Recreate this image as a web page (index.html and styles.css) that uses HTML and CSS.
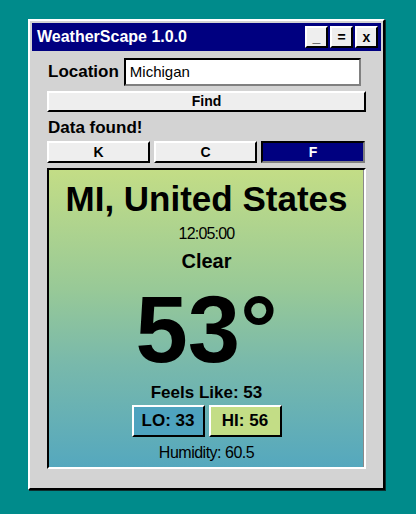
FILE: index.html
```html
<!DOCTYPE html>
<html>
<head>
<meta charset="utf-8">
<link rel="stylesheet" href="styles.css">
</head>
<body>
<div class="window">
  <div class="titlebar">
    <span class="title">WeatherScape 1.0.0</span>
    <div class="controls">
      <button class="ctl">_</button>
      <button class="ctl">=</button>
      <button class="ctl">x</button>
    </div>
  </div>
  <div class="content">
    <div class="loc-row">
      <label class="loc-label">Location</label>
      <div class="input">Michigan</div>
    </div>
    <button class="btn find">Find</button>
    <div class="status">Data found!</div>
    <div class="units">
      <button class="btn unit">K</button>
      <button class="btn unit">C</button>
      <button class="btn unit active">F</button>
    </div>
    <div class="panel">
      <div class="place">MI, United States</div>
      <div class="time">12:05:00</div>
      <div class="cond">Clear</div>
      <div class="temp">53°</div>
      <div class="feels">Feels Like: 53</div>
      <div class="range">
        <div class="box lo">LO: 33</div>
        <div class="box hi">HI: 56</div>
      </div>
      <div class="humid">Humidity: 60.5</div>
    </div>
  </div>
</div>
</body>
</html>
```
FILE: styles.css
```css
* { box-sizing: border-box; }
html, body { margin: 0; padding: 0; }
body {
  background: #008b8b;
  width: 416px;
  height: 514px;
  overflow: hidden;
  font-family: "Liberation Sans", Arial, sans-serif;
  color: #000;
  padding-top: 19px;
  padding-left: 28px;
}
.window {
  width: 357px;
  height: 471px;
  background: #d3d3d3;
  border-style: solid;
  border-width: 2px;
  border-color: #fff #000 #000 #fff;
  box-shadow: 1px 1px 0 #0b2e2e;
  padding: 2px;
  display: flex;
  flex-direction: column;
}
.titlebar {
  height: 28px;
  flex: none;
  background: #000080;
  display: flex;
  align-items: center;
  justify-content: space-between;
  padding: 0 3px 0 5px;
}
.title {
  color: #fff;
  font-weight: bold;
  font-size: 16px;
}
.controls { display: flex; gap: 2px; }
.ctl {
  width: 23px;
  height: 22px;
  padding: 0;
  background: #eeeeee;
  border-style: solid;
  border-width: 2px;
  border-color: #fff #000 #000 #fff;
  font-family: "Liberation Sans", Arial, sans-serif;
  font-weight: bold;
  font-size: 14px;
  color: #000;
  line-height: 16px;
}
.content {
  padding: 7px 14px 0 15px;
  display: flex;
  flex-direction: column;
}
.loc-row {
  display: flex;
  align-items: center;
  height: 28px;
  gap: 5px;
}
.loc-label {
  font-weight: bold;
  font-size: 17px;
  padding-left: 1px;
}
.input {
  width: 237px;
  height: 28px;
  background: #fff;
  border-style: solid;
  border-width: 2px;
  border-color: #000 #808080 #808080 #000;
  font-size: 15px;
  padding-left: 4px;
  line-height: 24px;
}
.btn {
  background: #eeeeee;
  border-style: solid;
  border-width: 2px;
  border-color: #fff #000 #000 #fff;
  font-family: "Liberation Sans", Arial, sans-serif;
  font-weight: bold;
  font-size: 14px;
  color: #000;
  padding: 0;
}
.find {
  margin-top: 5px;
  height: 21px;
  width: 319px;
  line-height: 17px;
}
.status {
  margin-top: 7px;
  font-weight: bold;
  font-size: 17px;
  line-height: 18px;
  padding-left: 1px;
}
.units {
  margin-top: 4px;
  display: grid;
  grid-template-columns: 103px 103px 104px;
  column-gap: 4px;
  height: 22px;
  width: 319px;
}
.unit { height: 22px; line-height: 18px; }
.unit.active {
  background: #000080;
  color: #fff;
  border-color: #000 #808080 #808080 #000;
}
.panel {
  margin-top: 5px;
  height: 301px;
  width: 319px;
  border-style: solid;
  border-width: 2px;
  border-color: #000 #fff #fff #000;
  box-shadow: inset -1px 0 0 #8a8a8a;
  background: linear-gradient(to bottom, #c3dd86 0%, #98c997 40%, #79b9ab 65%, #55a8be 100%);
  display: flex;
  flex-direction: column;
  align-items: center;
  padding-top: 9px;
}
.place {
  font-weight: bold;
  font-size: 35px;
  line-height: 40px;
}
.time {
  margin-top: 6px;
  font-size: 16px;
  letter-spacing: -0.8px;
  line-height: 18px;
}
.cond {
  margin-top: 6px;
  font-weight: bold;
  font-size: 20px;
  line-height: 24px;
}
.temp {
  margin-top: 7px;
  font-weight: bold;
  font-size: 94px;
  line-height: 100px;
}
.feels {
  margin-top: 3px;
  font-weight: bold;
  font-size: 17px;
  line-height: 20px;
}
.range {
  margin-top: 2px;
  display: flex;
  gap: 4px;
}
.box {
  width: 73px;
  height: 32px;
  border-style: solid;
  border-width: 2px;
  border-color: #fff #000 #000 #fff;
  font-weight: bold;
  font-size: 17px;
  line-height: 28px;
  text-align: center;
}
.lo { background: #4ea3bf; }
.hi { background: #c3dd86; }
.humid {
  margin-top: 7px;
  font-size: 16px;
  letter-spacing: -0.5px;
  line-height: 18px;
}
```
